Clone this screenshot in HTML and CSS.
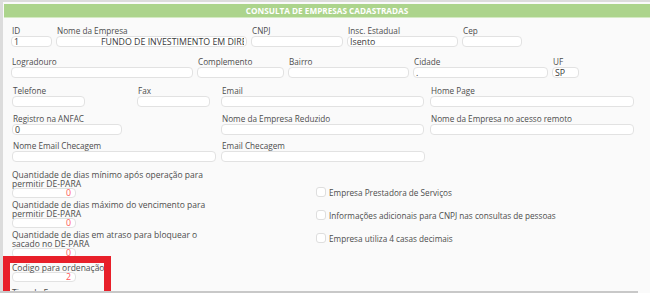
FILE: index.html
```html
<!DOCTYPE html>
<html lang="pt-BR">
<head>
  <meta charset="UTF-8" />
  <title>Consulta de Empresas Cadastradas</title>
  <link rel="stylesheet" href="styles.css">
</head>
<body>

  <div class="panel">
    <div class="panel-title">CONSULTA DE EMPRESAS CADASTRADAS</div>

    <form class="company-form">
      <div class="row row-1">
        <div class="field"><label>ID</label><input type="text" value="1" /></div>
        <div class="field"><label>Nome da Empresa</label><input type="text" class="name-input" value="FUNDO DE INVESTIMENTO EM DIREITOS CREDITORIOS" /></div>
        <div class="field"><label>CNPJ</label><input type="text" /></div>
        <div class="field"><label>Insc. Estadual</label><input type="text" value="Isento" /></div>
        <div class="field"><label>Cep</label><input type="text" /></div>
      </div>

      <div class="row row-2">
        <div class="field"><label>Logradouro</label><input type="text" /></div>
        <div class="field"><label>Complemento</label><input type="text" /></div>
        <div class="field"><label>Bairro</label><input type="text" /></div>
        <div class="field"><label>Cidade</label><input type="text" value="." /></div>
        <div class="field"><label>UF</label><input type="text" value="SP" /></div>
      </div>

      <div class="row wide row-3">
        <div class="field"><label>Telefone</label><input type="text" class="w-73" /></div>
        <div class="field"><label>Fax</label><input type="text" class="w-73" /></div>
        <div class="field"><label>Email</label><input type="text" /></div>
        <div class="field"><label>Home Page</label><input type="text" /></div>
      </div>

      <div class="row wide row-4">
        <div class="field"><label>Registro na ANFAC</label><input type="text" class="w-110" value="0" /></div>
        <div class="field col-3"><label>Nome da Empresa Reduzido</label><input type="text" /></div>
        <div class="field"><label>Nome da Empresa no acesso remoto</label><input type="text" /></div>
      </div>

      <div class="row wide row-5">
        <div class="field span-2"><label>Nome Email Checagem</label><input type="text" /></div>
        <div class="field"><label>Email Checagem</label><input type="text" /></div>
      </div>

      <div class="lower">
        <div class="qty-col">
          <div class="qty">
            <label>Quantidade de dias mínimo após operação para permitir DE-PARA</label>
            <input type="text" value="0" />
          </div>
          <div class="qty">
            <label>Quantidade de dias máximo do vencimento para permitir DE-PARA</label>
            <input type="text" value="0" />
          </div>
          <div class="qty">
            <label>Quantidade de dias em atraso para bloquear o sacado no DE-PARA</label>
            <input type="text" value="0" />
          </div>
          <div class="qty qty-order">
            <label>Codigo para ordenação</label>
            <input type="text" value="2" />
          </div>
          <div class="qty qty-next">
            <label>Tipo de Empresa</label>
          </div>
        </div>

        <div class="check-col">
          <label class="check"><input type="checkbox" /> Empresa Prestadora de Serviços</label>
          <label class="check"><input type="checkbox" /> Informações adicionais para CNPJ nas consultas de pessoas</label>
          <label class="check"><input type="checkbox" /> Empresa utiliza 4 casas decimais</label>
        </div>
      </div>
    </form>
  </div>

  <!-- highlight drawn over the field -->
  <div class="highlight"></div>
  <div class="hscroll"></div>

</body>
</html>
```

FILE: styles.css
```css
/* Reset */
* {
  margin: 0; padding: 0; box-sizing: border-box;
  font-family: 'Open Sans', sans-serif;
}

html, body {
  height: 100%;
  background: #fafafa;
  overflow: hidden;
}

/* Panel */
.panel {
  height: 100%;
  background: #fafafa;
  border-top: 2px solid #dcdcdc;
  border-left: 3px solid #dcdcdc;
  padding: 2px 0 0 1px;
}
.panel-title {
  height: 14px;
  line-height: 13px;
  background: #acd48c;
  border-bottom: 1px solid #d4eac3;
  color: #fff;
  font-size: 8.2px;
  font-weight: 700;
  text-align: center;
}

/* Form */
.company-form {
  padding: 8px 0 0 7px;
}
.row {
  display: grid;
  column-gap: 4px;
}
.row-1 { grid-template-columns: 41px 191px 92px 111px 60px; }
.row-2 { grid-template-columns: 182px 87px 121px 135px 27px; margin-top: 10px; }
.row.wide {
  grid-template-columns: 125px 84px 209px 204px;
  column-gap: 0;
  margin-left: 1px;
}
.row-3 { margin-top: 8px; }
.row-4 { margin-top: 7px; }
.row-5 { margin-top: 6px; }
.row.wide .field input { width: 203px; }
.row.wide .field input.w-73 { width: 73px; }
.row.wide .field input.w-110 { width: 110px; }
.row.wide .field:last-child input { width: 204px; }
.span-2 { grid-column: 1 / span 2; }
.col-3 { grid-column: 3; }
.row.wide .span-2 input { width: 204px; }

.field label {
  display: block;
  font-size: 8.2px;
  line-height: 10px;
  color: #4d4d4d;
  padding-left: 1px;
  white-space: nowrap;
}
.field input,
.qty input {
  appearance: none;
  display: block;
  width: 100%;
  height: 11px;
  border: 1px solid #e2e2e2;
  border-radius: 4px;
  background: #fff;
  color: #3a3a3a;
  font-size: 8.8px;
  line-height: 9px;
  padding: 0 2px;
  outline: none;
}
.field input.name-input {
  text-indent: 42px;
}

/* Lower area */
.lower {
  display: flex;
  margin-top: 8px;
  margin-left: 1px;
}
.qty-col {
  width: 205px;
}
.qty label {
  display: block;
  width: 200px;
  font-size: 8.5px;
  line-height: 9px;
  color: #4d4d4d;
}
.qty input {
  width: 64px;
  height: 10px;
  text-align: right;
  color: #f55;
  padding-right: 4px;
}
.qty + .qty { margin-top: 2px; }
.qty.qty-order { margin-top: 5px; }
.qty.qty-next { margin-top: 6px; }

.check-col {
  margin-left: 99px;
  padding-top: 17px;
}
.check {
  display: flex;
  align-items: flex-end;
  gap: 3px;
  height: 10px;
  font-size: 8.2px;
  line-height: 8px;
  color: #4d4d4d;
  white-space: nowrap;
}
.check + .check { margin-top: 13px; }
.check input {
  appearance: none;
  width: 10px;
  height: 10px;
  border: 1px solid #dedede;
  border-radius: 3px;
  background: #fff;
  flex: none;
}

/* Overlays */
.highlight {
  position: absolute;
  left: 3px;
  top: 256px;
  width: 108px;
  height: 60px;
  border: 7px solid #e8202a;
}
.hscroll {
  position: fixed;
  left: 0;
  bottom: 0;
  width: 638px;
  height: 2px;
  background: #c8c8c8;
}
```
